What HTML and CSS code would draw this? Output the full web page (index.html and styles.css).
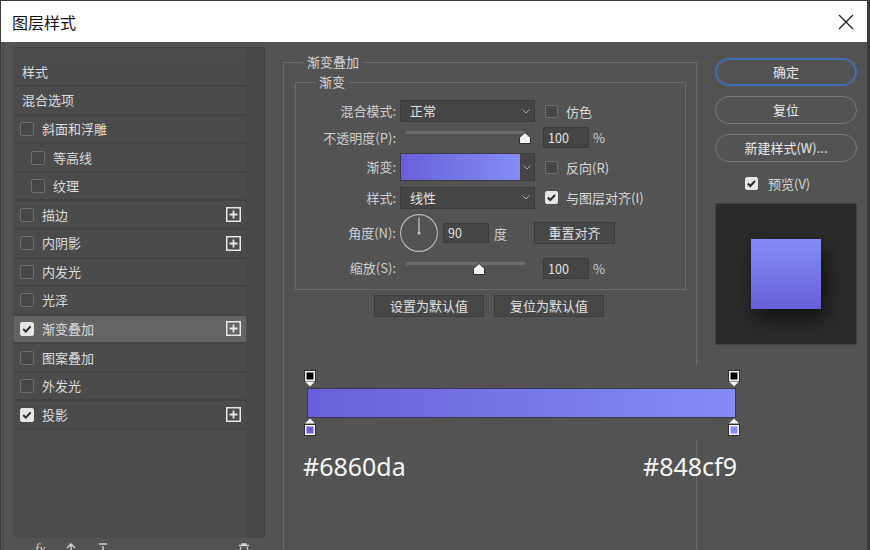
FILE: index.html
```html
<!DOCTYPE html>
<html lang="zh-CN">
<head>
<meta charset="utf-8">
<title>图层样式</title>
<link rel="stylesheet" href="styles.css">
</head>
<body>
<div class="window">
  <header class="titlebar">
    <span class="title">图层样式</span>
    <svg class="close" width="16" height="16" viewBox="0 0 16 16"><path d="M1 1 L15 15 M15 1 L1 15" stroke="#1f1f1f" stroke-width="1.3" fill="none"/></svg>
  </header>
  <div class="main">
    <aside class="left">
      <div class="listbox">
        <ul class="list">
          <li class="row plain">样式</li>
          <li class="row plain">混合选项</li>
          <li class="row"><span class="cb"></span><span>斜面和浮雕</span></li>
          <li class="row sub"><span class="cb"></span><span>等高线</span></li>
          <li class="row sub"><span class="cb"></span><span>纹理</span></li>
          <li class="row"><span class="cb"></span><span>描边</span><svg class="plus" width="15" height="15" viewBox="0 0 15 15"><rect x="0.75" y="0.75" width="13.5" height="13.5" fill="none" stroke="#e8e8e8" stroke-width="1.5"/><path d="M7.5 3.5v8M3.5 7.5h8" stroke="#e8e8e8" stroke-width="1.8"/></svg></li>
          <li class="row"><span class="cb"></span><span>内阴影</span><svg class="plus" width="15" height="15" viewBox="0 0 15 15"><rect x="0.75" y="0.75" width="13.5" height="13.5" fill="none" stroke="#e8e8e8" stroke-width="1.5"/><path d="M7.5 3.5v8M3.5 7.5h8" stroke="#e8e8e8" stroke-width="1.8"/></svg></li>
          <li class="row"><span class="cb"></span><span>内发光</span></li>
          <li class="row"><span class="cb"></span><span>光泽</span></li>
          <li class="row active"><span class="cb on"><svg viewBox="0 0 14 14" width="14" height="14"><path d="M3.2 7 L5.8 9.6 L10.6 4.4" stroke="#2a2a2a" stroke-width="2" fill="none"/></svg></span><span>渐变叠加</span><svg class="plus" width="15" height="15" viewBox="0 0 15 15"><rect x="0.75" y="0.75" width="13.5" height="13.5" fill="none" stroke="#e8e8e8" stroke-width="1.5"/><path d="M7.5 3.5v8M3.5 7.5h8" stroke="#e8e8e8" stroke-width="1.8"/></svg></li>
          <li class="row"><span class="cb"></span><span>图案叠加</span></li>
          <li class="row"><span class="cb"></span><span>外发光</span></li>
          <li class="row"><span class="cb on"><svg viewBox="0 0 14 14" width="14" height="14"><path d="M3.2 7 L5.8 9.6 L10.6 4.4" stroke="#2a2a2a" stroke-width="2" fill="none"/></svg></span><span>投影</span><svg class="plus" width="15" height="15" viewBox="0 0 15 15"><rect x="0.75" y="0.75" width="13.5" height="13.5" fill="none" stroke="#e8e8e8" stroke-width="1.5"/><path d="M7.5 3.5v8M3.5 7.5h8" stroke="#e8e8e8" stroke-width="1.8"/></svg></li>
        </ul>
        <div class="scroll"></div>
      </div>
      <div class="tools">
        <span class="fx">fx</span>
        <svg class="tool" width="12" height="14" viewBox="0 0 12 14"><path d="M6 1 V13 M2 5 L6 1 L10 5" stroke="#cfcfcf" stroke-width="1.5" fill="none"/></svg>
        <svg class="tool" width="12" height="14" viewBox="0 0 12 14"><path d="M2 1 H10 M6 3 V13 M2 9 L6 13 L10 9" stroke="#cfcfcf" stroke-width="1.5" fill="none"/></svg>
        <svg class="tool trash" width="12" height="14" viewBox="0 0 12 14"><path d="M1 2.5 H11 M4 2.5 V1 H8 V2.5 M2.5 4 V13 H9.5 V4" stroke="#cfcfcf" stroke-width="1.3" fill="none"/></svg>
      </div>
    </aside>

    <section class="content">
      <fieldset class="outer">
        <legend>渐变叠加</legend>
        <fieldset class="inner">
          <legend>渐变</legend>
          <div class="rows">
            <div class="frow r-blend">
              <span class="lbl">混合模式:</span>
              <div class="select"><span>正常</span><svg width="8" height="5" viewBox="0 0 8 5"><path d="M0.5 0.5 L4 4 L7.5 0.5" stroke="#a8a8a8" fill="none"/></svg></div>
              <label class="check"><span class="cb"></span><span>仿色</span></label>
            </div>
            <div class="frow r-opacity">
              <span class="lbl">不透明度(P):</span>
              <div class="slider"><div class="track"><svg class="thumb" style="left: calc(100% - 6px)" width="12" height="12" viewBox="0 0 12 12"><path d="M6 0.5 L11.5 5.5 V11.5 H0.5 V5.5 Z" fill="#f2f2f2" stroke="#2e2e2e"/></svg></div></div>
              <span class="num">100</span>
              <span class="unit">%</span>
            </div>
            <div class="frow r-grad">
              <span class="lbl">渐变:</span>
              <div class="gradsel"><div class="gradswatch"></div><div class="graddrop"><svg width="8" height="5" viewBox="0 0 8 5"><path d="M0.5 0.5 L4 4 L7.5 0.5" stroke="#a8a8a8" fill="none"/></svg></div></div>
              <label class="check"><span class="cb"></span><span>反向(R)</span></label>
            </div>
            <div class="frow r-style">
              <span class="lbl">样式:</span>
              <div class="select"><span>线性</span><svg width="8" height="5" viewBox="0 0 8 5"><path d="M0.5 0.5 L4 4 L7.5 0.5" stroke="#a8a8a8" fill="none"/></svg></div>
              <label class="check"><span class="cb on"><svg viewBox="0 0 13 13" width="13" height="13"><path d="M2.8 6.5 L5.3 9 L10 4" stroke="#2a2a2a" stroke-width="2" fill="none"/></svg></span><span>与图层对齐(I)</span></label>
            </div>
            <div class="frow r-angle">
              <span class="lbl">角度(N):</span>
              <svg class="dial" width="38" height="38" viewBox="0 0 38 38"><circle cx="19" cy="19" r="18.4" fill="none" stroke="#b9b9b9" stroke-width="1.1"/><path d="M19 19 V3.5" stroke="#c8c8c8" stroke-width="1.2"/><circle cx="19" cy="19" r="1.6" fill="#c8c8c8"/></svg>
              <span class="num short">90</span>
              <span class="deg">度</span>
              <button class="btn reset">重置对齐</button>
            </div>
            <div class="frow r-scale">
              <span class="lbl">缩放(S):</span>
              <div class="slider"><div class="track"><svg class="thumb" style="left: calc(61% - 6px)" width="12" height="12" viewBox="0 0 12 12"><path d="M6 0.5 L11.5 5.5 V11.5 H0.5 V5.5 Z" fill="#f2f2f2" stroke="#2e2e2e"/></svg></div></div>
              <span class="num">100</span>
              <span class="unit">%</span>
            </div>
          </div>
        </fieldset>
        <div class="defaults">
          <button class="btn wide">设置为默认值</button>
          <button class="btn wide">复位为默认值</button>
        </div>
        <div class="editor">
          <div class="stops">
            <svg width="12" height="17" viewBox="0 0 12 17"><rect x="0.5" y="0.5" width="11" height="11" fill="#f4f4f4" stroke="#2e2e2e"/><rect x="2.5" y="2.5" width="7" height="7" fill="#000"/><path d="M1 11.5 H11 L6 16.5 Z" fill="#f4f4f4"/></svg>
            <svg width="12" height="17" viewBox="0 0 12 17"><rect x="0.5" y="0.5" width="11" height="11" fill="#f4f4f4" stroke="#2e2e2e"/><rect x="2.5" y="2.5" width="7" height="7" fill="#000"/><path d="M1 11.5 H11 L6 16.5 Z" fill="#f4f4f4"/></svg>
          </div>
          <div class="bar"></div>
          <div class="stops">
            <svg width="12" height="18" viewBox="0 0 12 18"><path d="M6 0.5 L11 5.5 H1 Z" fill="#f4f4f4"/><rect x="0.5" y="6.5" width="11" height="11" fill="#f4f4f4" stroke="#2e2e2e"/><rect x="2.5" y="8.5" width="7" height="7" fill="#6860da"/></svg>
            <svg width="12" height="18" viewBox="0 0 12 18"><path d="M6 0.5 L11 5.5 H1 Z" fill="#f4f4f4"/><rect x="0.5" y="6.5" width="11" height="11" fill="#f4f4f4" stroke="#2e2e2e"/><rect x="2.5" y="8.5" width="7" height="7" fill="#848cf9"/></svg>
          </div>
        </div>
        <div class="hexes"><span>#6860da</span><span>#848cf9</span></div>
      </fieldset>
    </section>

    <aside class="right">
      <button class="pill primary">确定</button>
      <button class="pill">复位</button>
      <button class="pill">新建样式(W)...</button>
      <label class="check preview-check"><span class="cb on"><svg viewBox="0 0 13 13" width="13" height="13"><path d="M2.8 6.5 L5.3 9 L10 4" stroke="#2a2a2a" stroke-width="2" fill="none"/></svg></span><span>预览(V)</span></label>
      <div class="preview"><div class="swatch"></div></div>
    </aside>
  </div>
</div>
</body>
</html>
```
FILE: styles.css
```css
* { box-sizing: border-box; }
html, body { margin: 0; padding: 0; }
body {
  width: 870px;
  height: 550px;
  overflow: hidden;
  background: #535353;
  font-family: "Noto Sans CJK SC", "Noto Sans", sans-serif;
  font-size: 13px;
  color: #d4d4d4;
}
.window {
  height: 550px;
  border-left: 1px solid #3a3a3a;
  border-top: 1px solid #3a3a3a;
  border-right: 3px solid #3a3a3a;
  display: flex;
  flex-direction: column;
}
.titlebar {
  height: 41px;
  flex: none;
  background: #ffffff;
  display: flex;
  align-items: center;
  justify-content: space-between;
  padding: 0 13px 0 11px;
}
.title { font-size: 16px; line-height: 20px; color: #111; }
.close { display: block; }

.main { flex: 1; display: flex; overflow: hidden; }

/* left list */
.left {
  flex: none;
  margin-left: 2px;
  width: 263px;
  border-left: 1px solid #474747;
  padding: 5px 0 0 9px;
  display: flex;
  flex-direction: column;
}
.listbox {
  flex: none;
  width: 252px;
  height: 491px;
  border-top: 1px solid #464646;
  border-right: 2px solid #444444;
  background: #4d4d4d;
  display: flex;
}
.list {
  list-style: none;
  margin: 0;
  padding: 10.5px 0 0 1px;
  width: 233px;
}
.row {
  height: 28.58px;
  background: #4b4b4b;
  border-bottom: 2px solid #434343;
  display: flex;
  align-items: center;
  gap: 8px;
  padding-left: 6px;
  color: #dcdcdc;
  line-height: 18px;
}
.row.plain { padding-left: 8px; }
.row.sub { padding-left: 17px; }
.row.active { background: #646464; }
.list .cb { width: 14px; height: 14px; }
.plus { margin-left: auto; margin-right: 5px; display: block; }
.scroll { width: 17px; background: #484848; }
.tools {
  display: flex;
  align-items: flex-start;
  padding: 5px 0 0 14px;
  height: 20px;
}
.fx { font-family: "Liberation Serif", serif; font-style: italic; color: #cfcfcf; font-size: 14px; line-height: 14px; margin-left: 8px; }
.tool { display: block; margin-left: 20px; }
.tool.trash { margin-left: auto; margin-right: 16px; }

/* checkbox */
.cb {
  flex: none;
  display: block;
  width: 13px;
  height: 13px;
  border: 1px solid #6e6e6e;
  border-radius: 2px;
  background: #474747;
}
.cb svg { display: block; margin: -1px; }
.cb.on { background: #e6e6e6; border-color: #e6e6e6; }
.check { display: flex; align-items: center; gap: 8px; margin-left: 10px; color: #d8d8d8; }

/* content */
.content { flex: none; margin-left: 17px; width: 414px; }
fieldset { margin: 0; min-width: 0; border: 1px solid #696969; }
legend { padding: 0 4px; line-height: 18px; color: #d8d8d8; }
.outer { margin-top: 11px; height: 560px; padding: 2px 10px 0 11px; }
.outer > legend { margin-left: 8px; }
.inner { width: 391px; padding: 9px 0 10px 0; }
.inner > legend { margin-left: 19px; }

.rows { display: flex; flex-direction: column; gap: 5px; }
.frow { display: flex; align-items: center; }
.r-blend { height: 22px; }
.r-opacity { height: 21px; }
.r-grad { height: 28px; }
.r-style { height: 23px; }
.r-angle { height: 38px; }
.r-scale { height: 22px; }
.lbl { flex: none; width: 100px; text-align: right; margin-right: 4px; color: #cfcfcf; line-height: 18px; }

.select {
  flex: none;
  width: 135px;
  height: 22px;
  background: #454545;
  border: 1px solid #3b3b3b;
  display: flex;
  align-items: center;
  justify-content: space-between;
  padding: 0 4px 0 9px;
  color: #e2e2e2;
  line-height: 18px;
}
.select svg, .graddrop svg { display: block; }

.slider { flex: none; width: 135px; align-self: stretch; padding: 4px 10px 0 6px; }
.r-scale .slider { padding-top: 5px; }
.track { position: relative; height: 3px; background: #6c6c6c; }
.thumb { position: absolute; top: 1px; display: block; }

.num {
  flex: none;
  width: 46px;
  height: 21px;
  margin-left: 8px;
  background: #454545;
  border: 1px solid #3b3b3b;
  padding-left: 4px;
  color: #e2e2e2;
  font-size: 12.5px;
  line-height: 19px;
}
.r-scale .num { height: 21px; }
.num.short { margin-left: 5px; height: 20px; line-height: 18px; }
.unit { margin-left: 4px; color: #d0d0d0; }
.deg { margin-left: 5px; color: #d0d0d0; }

.gradsel {
  flex: none;
  width: 135px;
  height: 28px;
  border: 1px solid #3b3b3b;
  background: #454545;
  display: flex;
}
.gradswatch { width: 119px; background: linear-gradient(90deg, #6860da, #848cf9); }
.graddrop { flex: 1; display: flex; align-items: center; justify-content: center; }

.dial { display: block; flex: none; }

.btn {
  font: inherit;
  color: #e0e0e0;
  background: #474747;
  border: 1px solid #3c3c3c;
  height: 22px;
  padding: 0;
  line-height: 18px;
}
.btn.reset { width: 81px; margin-left: 27px; }
.defaults { display: flex; justify-content: center; gap: 10px; margin-top: 5px; padding-right: 3px; }
.btn.wide { width: 110px; }

/* gradient editor overlay */
.editor {
  margin: 49px 0 0 8px;
  width: 437px;
  background: #535353;
  padding: 4px 0 4px 1px;
  position: relative;
}
.stops { display: flex; justify-content: space-between; }
.stops svg { display: block; }
.bar {
  margin: 1px 4px 0 3px;
  height: 30px;
  border: 1px solid #3a3a4a;
  background: linear-gradient(90deg, #6860da, #848cf9);
}
.hexes {
  display: flex;
  justify-content: space-between;
  margin: 11px 0 0 8px;
  width: 434px;
  font-family: "Noto Sans", sans-serif;
  font-size: 25px;
  line-height: 30px;
  color: #f5f5f5;
}

/* right column */
.right {
  flex: none;
  margin-left: 18px;
  width: 142px;
  padding-top: 16px;
  display: flex;
  flex-direction: column;
}
.pill {
  font: inherit;
  height: 28px;
  border-radius: 14px;
  border: 1px solid #787878;
  background: transparent;
  color: #e8e8e8;
  margin: 0 0 10px 0;
  padding: 0;
  line-height: 18px;
}
.pill.primary { border: 2px solid #3e6db3; }
.preview-check { margin: 4px 0 0 30px; height: 14px; gap: 10px; }
.preview {
  margin-top: 13px;
  width: 142px;
  height: 142px;
  background: #2b2b2b;
  border: 1px solid #434343;
  display: flex;
  align-items: center;
  justify-content: center;
}
.swatch {
  width: 70px;
  height: 70px;
  background: linear-gradient(#848cf9, #6860da);
  box-shadow: 4px 10px 18px rgba(0, 0, 0, 0.6);
}
```
